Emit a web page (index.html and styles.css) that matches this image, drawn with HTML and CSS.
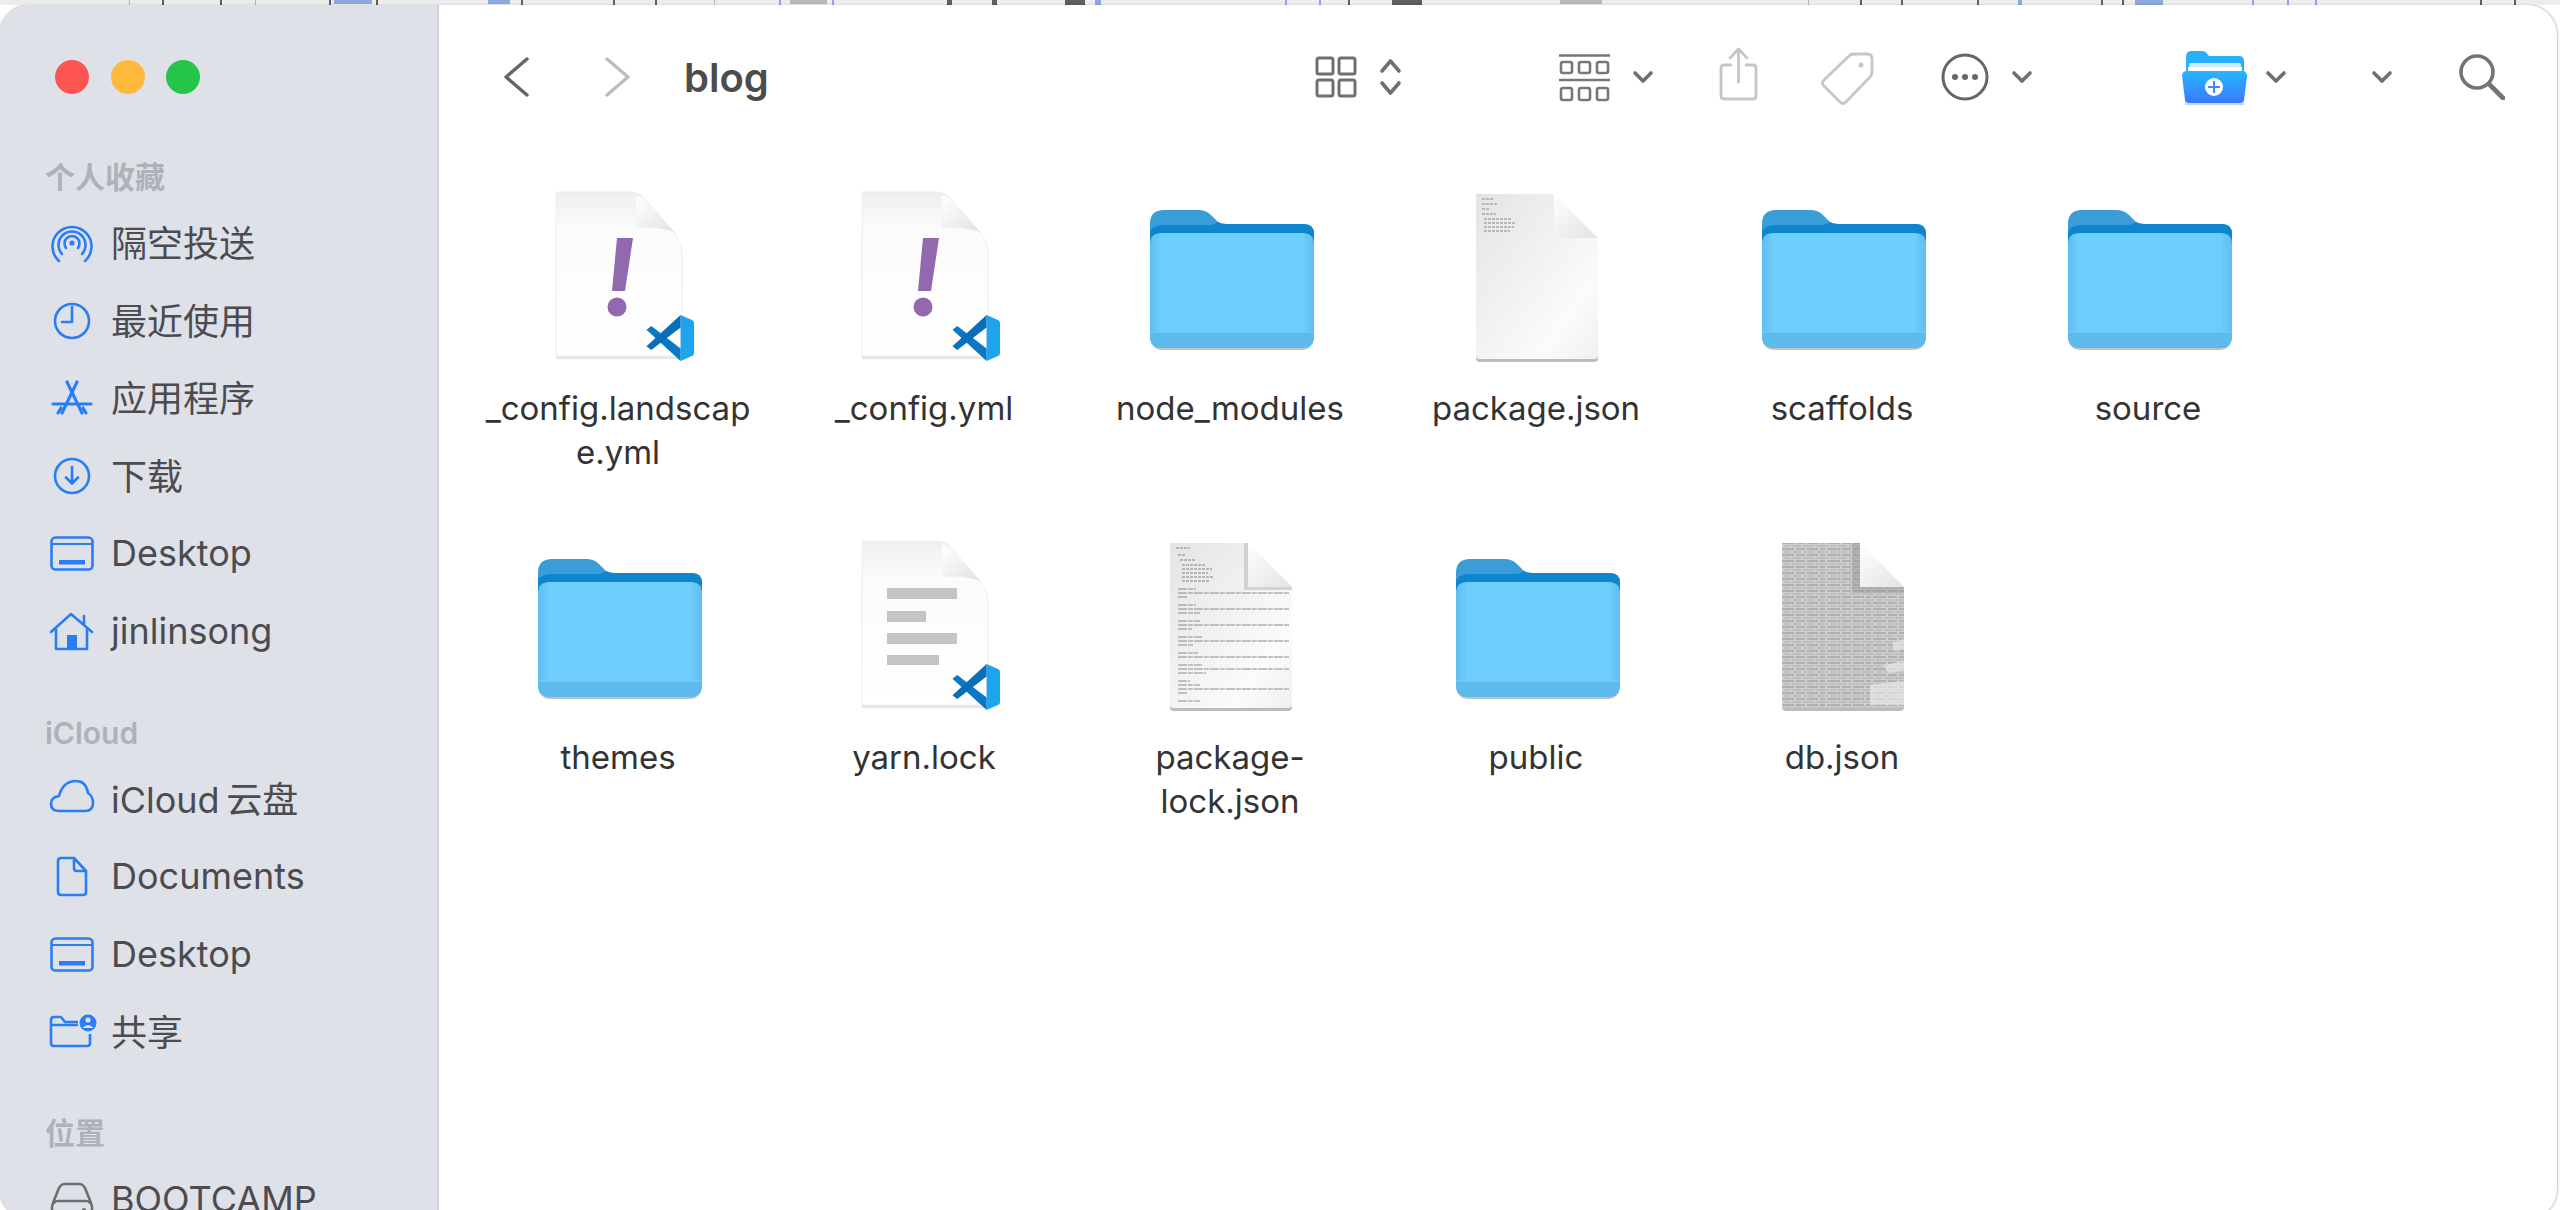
FILE: index.html
```html
<!DOCTYPE html>
<html lang="zh-CN">

<head>
  <meta charset="UTF-8">
  <title>blog</title>
  <link rel="stylesheet" href="styles.css">
</head>

<body>
  <!-- shared icons -->
  <svg class="defs" xmlns="http://www.w3.org/2000/svg">
    <defs>
      <linearGradient id="pageShade" x1="0" y1="0" x2="0" y2="1">
        <stop offset="0" stop-color="#efefef"/>
        <stop offset="0.22" stop-color="#fbfbfb"/>
        <stop offset="1" stop-color="#ffffff"/>
      </linearGradient>
      <linearGradient id="docShade" x1="0" y1="0" x2="1" y2="1">
        <stop offset="0" stop-color="#e4e4e4"/>
        <stop offset="0.75" stop-color="#fbfbfb"/>
        <stop offset="1" stop-color="#f0f0f0"/>
      </linearGradient>
      <linearGradient id="foldShade" x1="0" y1="0" x2="1" y2="1">
        <stop offset="0" stop-color="#ffffff"/>
        <stop offset="1" stop-color="#e2e2e2"/>
      </linearGradient>
      <linearGradient id="folderFront" x1="0" y1="0" x2="1" y2="0">
        <stop offset="0" stop-color="#5dbef0"/>
        <stop offset="0.07" stop-color="#6dcdfb"/>
        <stop offset="0.93" stop-color="#6dcdfb"/>
        <stop offset="1" stop-color="#5dbef0"/>
      </linearGradient>
      <linearGradient id="newFolder" x1="0" y1="0" x2="0" y2="1">
        <stop offset="0" stop-color="#27b7ff"/>
        <stop offset="1" stop-color="#3a78fb"/>
      </linearGradient>
      <pattern id="denseText" width="46" height="6" patternUnits="userSpaceOnUse">
        <path d="M0 2H7M9 2H20M22 2H27M29 2H42M44 2H46" stroke="#b0b0b0" stroke-width="2"/>
        <path d="M0 5H3M5 5H16M18 5H30M32 5H38M40 5H46" stroke="#bababa" stroke-width="1.6"/>
      </pattern>

      <symbol id="folder" viewBox="0 0 180 180">
        <rect x="11" y="100" width="162" height="64" rx="10" fill="#8f8f8f" opacity="0.55"/>
        <path d="M10 38Q10 24 24 24H58Q66 24 71 29L78 36Q81 38 86 38H164Q174 38 174 48V80H10Z" fill="#3a9dd8"/>
        <path d="M10 47Q10 40 22 39H72L78 36Q81 38 86 38H164Q174 38 174 48V56H10Z" fill="#0d86ce"/>
        <path d="M10 58Q10 47 22 47H162Q174 47 174 58V150Q174 162 162 162H22Q10 162 10 150Z" fill="url(#folderFront)"/>
        <path d="M10 146H174V150Q174 162 162 162H22Q10 162 10 150Z" fill="#5dbaec"/>
        <path d="M10 146H174" stroke="#74c9f5" stroke-width="1.5"/>
      </symbol>

      <symbol id="vscode" viewBox="0 0 100 100">
        <path d="M72 2L97 13Q100 15 100 19V81Q100 85 97 87L72 98Z" fill="#1ea4ef"/>
        <path d="M1 33L11 25L72 72V98Z" fill="#0a78c4"/>
        <path d="M72 2V28L11 75L1 67Z" fill="#0a6fb8"/>
      </symbol>

      <symbol id="vsPage" viewBox="0 0 180 180">
        <path d="M28 6H102Q112 6 118 14L146 46Q154 56 154 68V171H28Z" fill="#c8c8c8" transform="translate(0 2)" opacity="0.45"/>
        <path d="M28 6H102Q112 6 118 14L146 46Q154 56 154 68V170H28Z" fill="url(#pageShade)" stroke="#eeeeee" stroke-width="1"/>
        <path d="M108 10Q112 10 118 14L146 46Q128 40 108 42Z" fill="url(#foldShade)"/>
      </symbol>

      <symbol id="plainDoc" viewBox="0 0 180 180">
        <path d="M30 10H108L152 54V170Q152 174 148 174H34Q30 174 30 170Z" fill="#bcbcbc" transform="translate(0 2)"/>
        <path d="M30 8H108L152 52V170Q152 173 148 173H34Q30 173 30 170Z" fill="url(#docShade)"/>
        <path d="M108 8V48Q108 52 112 52H152Z" fill="url(#foldShade)"/>
      </symbol>
    </defs>
  </svg>

  <!-- what shows of the window behind -->
  <svg class="backdrop" width="2560" height="5" xmlns="http://www.w3.org/2000/svg">
    <g fill="#1d1d1d">
      <rect x="162" width="2" height="5"/><rect x="220" width="2" height="5"/><rect x="329" width="2" height="5"/>
      <rect x="376" width="2" height="5"/><rect x="521" width="2" height="5"/><rect x="613" width="2" height="5"/>
      <rect x="655" width="2" height="5"/><rect x="947" width="5" height="5"/><rect x="992" width="5" height="5"/>
      <rect x="1065" width="20" height="5"/><rect x="1348" width="2" height="5"/><rect x="1392" width="30" height="5"/>
      <rect x="1860" width="2" height="5"/><rect x="1901" width="2" height="5"/><rect x="1977" width="2" height="5"/>
      <rect x="2101" width="2" height="5"/><rect x="2122" width="2" height="5"/><rect x="2480" width="2" height="5"/>
      <rect x="2514" width="2" height="5"/>
    </g>
    <g fill="#5f86cf">
      <rect x="334" width="38" height="4"/><rect x="488" width="22" height="4"/><rect x="779" width="2" height="5"/>
      <rect x="832" width="2" height="5"/><rect x="1095" width="6" height="5"/><rect x="1285" width="2" height="5"/>
      <rect x="1319" width="2" height="5"/><rect x="2018" width="4" height="5"/><rect x="2135" width="28" height="5"/>
      <rect x="2252" width="2" height="5"/><rect x="2287" width="2" height="5"/><rect x="2315" width="2" height="5"/>
    </g>
    <g fill="#9b9b9b">
      <rect x="790" width="37" height="4"/><rect x="1560" width="42" height="4"/>
      <rect x="129" width="1" height="5"/><rect x="255" width="1" height="5"/><rect x="714" width="1" height="5"/><rect x="1808" width="1" height="5"/>
    </g>
  </svg>

  <div class="window">
    <aside class="sidebar">
      <div class="lights">
        <span class="light light-red"></span>
        <span class="light light-yellow"></span>
        <span class="light light-green"></span>
      </div>

      <div class="side-title">个人收藏</div>
      <div class="side-row">
        <svg class="side-icon" viewBox="0 0 52 52"><g fill="none" stroke="#2a7ef5" stroke-width="2.6" stroke-linecap="round"><path d="M13 44A19.5 19.5 0 1 1 39 44"/><path d="M16 37A13.5 13.5 0 1 1 36 37"/><path d="M20 31A7.5 7.5 0 1 1 32 31"/></g><circle cx="26" cy="26" r="2.6" fill="#2a7ef5"/><path d="M22 40L26 31L30 40Z" fill="#dfe1e8"/></svg>
        <span class="side-cjk">隔空投送</span>
      </div>
      <div class="side-row">
        <svg class="side-icon" viewBox="0 0 52 52"><g fill="none" stroke="#2a7ef5" stroke-width="2.6" stroke-linecap="round" stroke-linejoin="round"><circle cx="26" cy="27" r="17"/><path d="M26 13V28H16"/></g></svg>
        <span class="side-cjk">最近使用</span>
      </div>
      <div class="side-row">
        <svg class="side-icon" viewBox="0 0 52 52"><g fill="none" stroke="#2a7ef5" stroke-width="3.2" stroke-linecap="round"><path d="M21 10L36 41"/><path d="M31 10L16 41"/><path d="M7 32H45"/><path d="M12 41L15 36M40 41L37 36"/></g></svg>
        <span class="side-cjk">应用程序</span>
      </div>
      <div class="side-row">
        <svg class="side-icon" viewBox="0 0 52 52"><g fill="none" stroke="#2a7ef5" stroke-width="2.6" stroke-linecap="round" stroke-linejoin="round"><circle cx="26" cy="26" r="17"/><path d="M26 17V33M20 27.5L26 33.5L32 27.5"/></g></svg>
        <span class="side-cjk">下载</span>
      </div>
      <div class="side-row">
        <svg class="side-icon" viewBox="0 0 52 52"><rect x="5.5" y="10.5" width="41" height="32" rx="4" fill="none" stroke="#2a7ef5" stroke-width="2.6"/><path d="M6 17H46" stroke="#2a7ef5" stroke-width="2"/><rect x="13" y="33" width="26" height="4.5" fill="#2a7ef5"/></svg>
        <span>Desktop</span>
      </div>
      <div class="side-row">
        <svg class="side-icon" viewBox="0 0 52 52"><g fill="none" stroke="#2a7ef5" stroke-width="2.6" stroke-linecap="round" stroke-linejoin="round"><path d="M5 27L25 9L46 27"/><path d="M10 24V44H41V24"/><path d="M38 11V19"/></g><rect x="21" y="30" width="10" height="14" fill="#2a7ef5"/></svg>
        <span>jinlinsong</span>
      </div>

      <div class="side-title side-title-gap">iCloud</div>
      <div class="side-row">
        <svg class="side-icon" viewBox="0 0 52 52"><path d="M13 39Q5 39 5 32Q5 25 13 24Q17 9 30 9Q40 9 42 21Q47 24 47 31Q47 39 39 39Z" fill="none" stroke="#2a7ef5" stroke-width="2.6" stroke-linejoin="round"/></svg>
        <span class="side-cjk">iCloud&#8201;云盘</span>
      </div>
      <div class="side-row">
        <svg class="side-icon" viewBox="0 0 52 52"><g fill="none" stroke="#2a7ef5" stroke-width="2.6" stroke-linejoin="round"><path d="M15 8H28L40 21V42Q40 45 37 45H15Q12 45 12 42V11Q12 8 15 8Z"/><path d="M28 8V18Q28 21 31 21H40"/></g></svg>
        <span>Documents</span>
      </div>
      <div class="side-row">
        <svg class="side-icon" viewBox="0 0 52 52"><rect x="5.5" y="10.5" width="41" height="32" rx="4" fill="none" stroke="#2a7ef5" stroke-width="2.6"/><path d="M6 17H46" stroke="#2a7ef5" stroke-width="2"/><rect x="13" y="33" width="26" height="4.5" fill="#2a7ef5"/></svg>
        <span>Desktop</span>
      </div>
      <div class="side-row">
        <svg class="side-icon" viewBox="0 0 52 52"><path d="M32 17H19L15 12H8Q5 12 5 15V38Q5 41 8 41H41Q44 41 44 38V29M5 20H32" fill="none" stroke="#2a7ef5" stroke-width="2.6" stroke-linejoin="round"/><circle cx="42" cy="18" r="8.5" fill="#2a7ef5"/><circle cx="42" cy="15" r="2.6" fill="#dfe1e8"/><path d="M36.5 23Q42 17 47.5 23Z" fill="#dfe1e8"/></svg>
        <span class="side-cjk">共享</span>
      </div>

      <div class="side-title side-title-gap">位置</div>
      <div class="side-row">
        <svg class="side-icon" viewBox="0 0 52 52"><g fill="none" stroke="#6d6d72" stroke-width="2.6" stroke-linejoin="round"><path d="M7 30L13 15Q15 11 19 11H33Q37 11 39 15L45 30"/><rect x="6" y="28" width="40" height="17" rx="6"/></g><circle cx="38" cy="37" r="2" fill="#6d6d72"/></svg>
        <span>BOOTCAMP</span>
      </div>
    </aside>

    <main class="content">
      <header class="toolbar">
        <div class="nav">
          <svg class="nav-arrow" viewBox="0 0 28 40"><path d="M25 2L4 20L25 38" fill="none" stroke="#666" stroke-width="3.4" stroke-linecap="round" stroke-linejoin="round"/></svg>
          <svg class="nav-arrow nav-next" viewBox="0 0 28 40"><path d="M3 2L24 20L3 38" fill="none" stroke="#bdbdbd" stroke-width="3.4" stroke-linecap="round" stroke-linejoin="round"/></svg>
          <h1 class="folder-name">blog</h1>
        </div>

        <div class="tools">
          <div class="tool-group">
            <svg class="tool-view" viewBox="0 0 42 42"><g fill="none" stroke="#6f6f6f" stroke-width="3"><rect x="2" y="2" width="16" height="16" rx="2"/><rect x="24" y="2" width="16" height="16" rx="2"/><rect x="2" y="24" width="16" height="16" rx="2"/><rect x="24" y="24" width="16" height="16" rx="2"/></g></svg>
            <svg class="tool-sort" viewBox="0 0 23 38"><path d="M3 13L11.5 3L20 13M3 25L11.5 35L20 25" fill="none" stroke="#6f6f6f" stroke-width="3.6" stroke-linecap="round" stroke-linejoin="round"/></svg>
          </div>
          <div class="tool-group tool-list">
            <svg class="tool-arrange" viewBox="0 0 51 49"><g fill="none" stroke="#777" stroke-width="2.6"><path d="M0 2.5H51M0 27H51"/><rect x="2" y="9" width="11" height="11" rx="2"/><rect x="20" y="9" width="11" height="11" rx="2"/><rect x="38" y="9" width="11" height="11" rx="2"/><rect x="2" y="35" width="11" height="12" rx="2"/><rect x="20" y="35" width="11" height="12" rx="2"/><rect x="38" y="35" width="11" height="12" rx="2"/></g></svg>
            <svg class="chevron" viewBox="0 0 22 14"><path d="M3 3L11 11L19 3" fill="none" stroke="#6f6f6f" stroke-width="3.6" stroke-linecap="round" stroke-linejoin="round"/></svg>
          </div>
          <svg class="tool-share" viewBox="0 0 39 54"><g fill="none" stroke="#c6c6c6" stroke-width="2.8" stroke-linecap="round" stroke-linejoin="round"><path d="M12 18H5Q2 18 2 21V49Q2 52 5 52H34Q37 52 37 49V21Q37 18 34 18H27"/><path d="M19.5 35V3M11 11L19.5 2L28 11"/></g></svg>
          <svg class="tool-tag" viewBox="0 0 54 54"><g fill="none" stroke="#c6c6c6" stroke-width="2.8" stroke-linejoin="round"><path d="M4 28L29 4Q31 2 34 2H47Q52 2 52 7V20Q52 23 50 25L26 50Q23 53 20 50L4 34Q1 31 4 28Z"/></g><circle cx="41" cy="13" r="2.5" fill="#c6c6c6"/></svg>
          <div class="tool-group tool-more">
            <svg class="tool-dots" viewBox="0 0 48 48"><circle cx="24" cy="24" r="22" fill="none" stroke="#666" stroke-width="3"/><circle cx="14" cy="24" r="3" fill="#666"/><circle cx="24" cy="24" r="3" fill="#666"/><circle cx="34" cy="24" r="3" fill="#666"/></svg>
            <svg class="chevron" viewBox="0 0 22 14"><path d="M3 3L11 11L19 3" fill="none" stroke="#6f6f6f" stroke-width="3.6" stroke-linecap="round" stroke-linejoin="round"/></svg>
          </div>
          <div class="tool-group tool-new">
            <svg class="tool-folder" viewBox="0 0 65 55"><path d="M4 7Q4 1 9 1H20Q24 1 26 5L27 6H57Q62 6 62 11V22H4Z" fill="#27b0fb"/><rect x="7" y="13" width="52" height="7" rx="2" fill="#cfe9fb"/><rect x="6" y="17" width="54" height="4" fill="#ffffff"/><path d="M0 26Q0 21 5 21H60Q65 21 65 26V27L62 50Q62 53 58 53H7Q3 53 3 50Z" fill="url(#newFolder)"/><path d="M3 53H62V55H3Z" fill="#c7d8f7"/><circle cx="32" cy="37" r="9" fill="#fff"/><path d="M32 31V43M26 37H38" stroke="#3a8cfc" stroke-width="2"/></svg>
            <svg class="chevron chevron-new" viewBox="0 0 22 14"><path d="M3 3L11 11L19 3" fill="none" stroke="#6f6f6f" stroke-width="3.6" stroke-linecap="round" stroke-linejoin="round"/></svg>
          </div>
          <svg class="chevron chevron-alone" viewBox="0 0 22 14"><path d="M3 3L11 11L19 3" fill="none" stroke="#6f6f6f" stroke-width="3.6" stroke-linecap="round" stroke-linejoin="round"/></svg>
          <svg class="tool-search" viewBox="0 0 46 46"><g fill="none" stroke="#747474" stroke-width="3.6" stroke-linecap="round"><circle cx="18" cy="18" r="16"/><path d="M30 30L44 44" stroke-width="4.6"/></g></svg>
        </div>
      </header>

      <section class="files">
        <div class="file">
          <svg class="file-icon" viewBox="0 0 180 180">
            <use href="#vsPage" width="180" height="180"/>
            <path d="M89 52H105L97 105H84Z" fill="#9268ae"/>
            <circle cx="89" cy="121" r="9.5" fill="#9268ae"/>
            <use href="#vscode" x="118" y="128" width="48" height="48"/>
          </svg>
          <div class="file-name">_config.landscap<br>e.yml</div>
        </div>
        <div class="file">
          <svg class="file-icon" viewBox="0 0 180 180">
            <use href="#vsPage" width="180" height="180"/>
            <path d="M89 52H105L97 105H84Z" fill="#9268ae"/>
            <circle cx="89" cy="121" r="9.5" fill="#9268ae"/>
            <use href="#vscode" x="118" y="128" width="48" height="48"/>
          </svg>
          <div class="file-name">_config.yml</div>
        </div>
        <div class="file">
          <svg class="file-icon" viewBox="0 0 180 180"><use href="#folder" width="180" height="180"/></svg>
          <div class="file-name">node_modules</div>
        </div>
        <div class="file">
          <svg class="file-icon" viewBox="0 0 180 180">
            <use href="#plainDoc" width="180" height="180"/>
            <path d="M36 13H48M36 18H52M36 23H44M36 28H50M38 33H66M38 37H70M38 41H68M38 45H64" stroke="#a8a8a8" stroke-width="1.6" stroke-dasharray="3 1"/>
          </svg>
          <div class="file-name">package.json</div>
        </div>
        <div class="file">
          <svg class="file-icon" viewBox="0 0 180 180"><use href="#folder" width="180" height="180"/></svg>
          <div class="file-name">scaffolds</div>
        </div>
        <div class="file">
          <svg class="file-icon" viewBox="0 0 180 180"><use href="#folder" width="180" height="180"/></svg>
          <div class="file-name">source</div>
        </div>

        <div class="file">
          <svg class="file-icon" viewBox="0 0 180 180"><use href="#folder" width="180" height="180"/></svg>
          <div class="file-name">themes</div>
        </div>
        <div class="file">
          <svg class="file-icon" viewBox="0 0 180 180">
            <use href="#vsPage" width="180" height="180"/>
            <g fill="#c4c4c4">
              <rect x="53" y="53" width="70" height="11"/>
              <rect x="53" y="76" width="39" height="11"/>
              <rect x="53" y="98" width="70" height="11"/>
              <rect x="53" y="120" width="52" height="10"/>
            </g>
            <use href="#vscode" x="118" y="128" width="48" height="48"/>
          </svg>
          <div class="file-name">yarn.lock</div>
        </div>
        <div class="file">
          <svg class="file-icon" viewBox="0 0 180 180">
            <use href="#plainDoc" width="180" height="180"/>
            <path d="M104 8H108V52H152V55H104Z" fill="#bdbdbd" opacity="0.6"/>
            <g opacity="0.75">
              <path d="M36 13H50M38 20H46M40 25H56M42 30H66M42 34H72M42 38H68M42 42H74M42 46H70" stroke="#8e8e8e" stroke-width="1.5" stroke-dasharray="3 1"/>
              <path d="M38 54H56M38 58H150M38 62H48M38 70H56M38 74H150M38 78H60M38 86H60M38 90H150M38 94H52M38 102H62M38 106H150M38 110H54M38 118H58M38 122H150M38 130H62M38 134H150M38 138H66M38 146H50M38 150H60M38 154H150M38 158H48M38 166H60" stroke="#989898" stroke-width="1.5" stroke-dasharray="9 1 5 1"/>
            </g>
          </svg>
          <div class="file-name">package-<br>lock.json</div>
        </div>
        <div class="file">
          <svg class="file-icon" viewBox="0 0 180 180"><use href="#folder" width="180" height="180"/></svg>
          <div class="file-name">public</div>
        </div>
        <div class="file">
          <svg class="file-icon" viewBox="0 0 180 180">
            <use href="#plainDoc" width="180" height="180"/>
            <path d="M30 8H108V52H152V170Q152 173 148 173H34Q30 173 30 170Z" fill="#cdcdcd"/>
            <path d="M30 8H108V52H152V170Q152 173 148 173H34Q30 173 30 170Z" fill="url(#denseText)"/>
            <path d="M100 8H108V52H152V58H100Z" fill="#9a9a9a" opacity="0.45"/>
            <path d="M118 170V150L152 146V170ZM132 130L152 126V136L136 138ZM140 108L152 104V114L142 116Z" fill="#eeeeee" opacity="0.6"/>
          </svg>
          <div class="file-name">db.json</div>
        </div>
      </section>
    </main>
  </div>
</body>

</html>
```

FILE: styles.css
```css
* {
  box-sizing: border-box;
}

html,
body {
  height: 1210px;
  margin: 0;
  overflow: hidden;
  background: #fff;
}

body {
  font-family: Inter, "Noto Sans CJK SC", sans-serif;
}

.defs {
  position: absolute;
  width: 0;
  height: 0;
}

.backdrop {
  display: block;
  background: #e6e6e6;
  opacity: 0.7;
}

/* window */
.window {
  display: flex;
  width: 2557px;
  height: 1214px;
  overflow: hidden;
  border-radius: 30px;
  background: #fff;
  box-shadow: 0 0 3px rgba(0, 0, 0, 0.45);
}

/* sidebar */
.sidebar {
  flex: 0 0 439px;
  padding-top: 55px;
  background: #dfe1e8;
  border-right: 2px solid #d1d4db;
}

.lights {
  display: flex;
  gap: 21.5px;
  padding-left: 55px;
  margin-bottom: 56px;
}

.light {
  width: 34px;
  height: 34px;
  border-radius: 50%;
}

.light-red {
  background: #fd5652;
}

.light-yellow {
  background: #fdb93a;
}

.light-green {
  background: #24c548;
}

.side-title {
  height: 54px;
  padding-left: 45px;
  font-size: 30px;
  font-weight: 600;
  line-height: 54px;
  color: #aeb1b9;
}

.side-title-gap {
  margin-top: 36px;
}

.side-row {
  display: flex;
  align-items: center;
  gap: 13px;
  height: 77.6px;
  padding-left: 46px;
  font-size: 36px;
  color: #4b4b50;
  white-space: nowrap;
}

.side-cjk {
  padding-bottom: 3px;
}

.side-icon {
  flex: 0 0 52px;
  width: 52px;
  height: 52px;
}

/* main area */
.content {
  flex: 1;
  min-width: 0;
}

.toolbar {
  display: flex;
  align-items: center;
  justify-content: space-between;
  height: 144px;
  padding: 0 52px 0 63px;
}

.nav {
  display: flex;
  align-items: center;
}

.nav-arrow {
  width: 28px;
  height: 40px;
}

.nav-next {
  margin-left: 74px;
}

.folder-name {
  margin: 0 0 0 52px;
  font-size: 40px;
  font-weight: 600;
  color: #4c4c4c;
}

.tools,
.tool-group {
  display: flex;
  align-items: center;
}

.tool-group {
  gap: 22px;
}

.tool-view {
  width: 42px;
  height: 42px;
}

.tool-sort {
  width: 23px;
  height: 38px;
}

.tool-list {
  margin-left: 157px;
}

.tool-arrange {
  width: 51px;
  height: 49px;
}

.chevron {
  width: 22px;
  height: 14px;
}

.tool-share {
  width: 39px;
  height: 54px;
  margin-left: 65px;
  margin-top: -6px;
}

.tool-tag {
  width: 54px;
  height: 54px;
  margin-left: 62px;
  margin-top: 3px;
}

.tool-more {
  margin-left: 67px;
}

.tool-dots {
  width: 48px;
  height: 48px;
}

.tool-new {
  margin-left: 149px;
  gap: 18px;
}

.tool-folder {
  width: 65px;
  height: 55px;
}

.chevron-alone {
  margin-left: 84px;
}

.tool-search {
  width: 46px;
  height: 46px;
  margin-left: 66px;
}

/* icon grid */
.files {
  display: grid;
  grid-template-columns: repeat(6, 306px);
  grid-auto-rows: 349px;
  padding: 37px 0 0 26px;
}

.file {
  display: flex;
  flex-direction: column;
  align-items: center;
}

.file-icon {
  width: 180px;
  height: 180px;
}

.file-name {
  margin-top: 20px;
  font-size: 33px;
  line-height: 44px;
  color: #333;
  text-align: center;
  white-space: nowrap;
}
```
